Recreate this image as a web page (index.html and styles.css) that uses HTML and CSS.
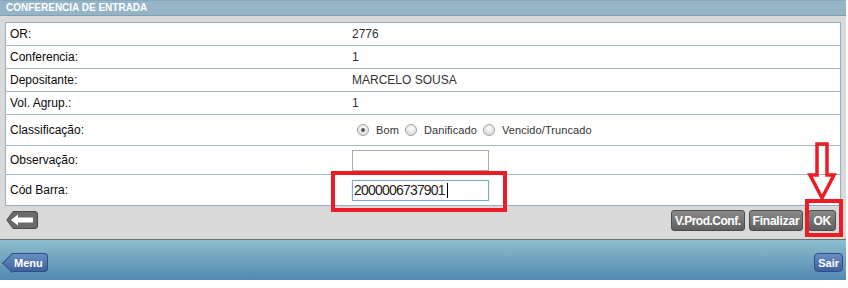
FILE: index.html
```html
<!DOCTYPE html>
<html>
<head>
<meta charset="utf-8">
<link rel="stylesheet" href="styles.css">
</head>
<body>
<div class="page">
  <div class="titlebar">CONFERENCIA DE ENTRADA</div>
  <div class="panel">
    <table class="grid">
      <tr class="r23"><td class="lbl">OR:</td><td class="val">2776</td></tr>
      <tr class="r23"><td class="lbl">Conferencia:</td><td class="val">1</td></tr>
      <tr class="r23"><td class="lbl">Depositante:</td><td class="val">MARCELO SOUSA</td></tr>
      <tr class="r23"><td class="lbl">Vol. Agrup.:</td><td class="val">1</td></tr>
      <tr class="r31"><td class="lbl">Classificação:</td><td class="val">
        <div class="radios">
          <span class="radio checked"></span><span class="rtxt">Bom</span>
          <span class="radio"></span><span class="rtxt">Danificado</span>
          <span class="radio"></span><span class="rtxt">Vencido/Truncado</span>
        </div>
      </td></tr>
      <tr class="r29"><td class="lbl">Observação:</td><td class="val"><div class="input"></div></td></tr>
      <tr class="r30 last"><td class="lbl">Cód Barra:</td><td class="val"><div class="input focus">2000006737901<span class="caret"></span></div></td></tr>
    </table>
    <div class="actions">
      <div class="back">
        <svg width="32" height="18" viewBox="0 0 32 18">
          <path d="M7 0.5 H29 Q31.5 0.5 31.5 3 V15 Q31.5 17.5 29 17.5 H7 L0.8 9 Z" fill="#6a6a6a" stroke="#4a4a4a" stroke-width="1"/>
          <path d="M5 9 L12 3.5 V6.5 H27 V11.5 H12 V14.5 Z" fill="#fff"/>
        </svg>
      </div>
      <div class="btns">
        <span class="gbtn narrow">V.Prod.Conf.</span>
        <span class="gbtn">Finalizar</span>
        <span class="gbtn ok">OK</span>
      </div>
    </div>
  </div>
  <div class="footer">
    <span class="menu">Menu</span>
    <span class="sair">Sair</span>
  </div>
  <div class="mark mark-input"></div>
  <div class="mark mark-ok"></div>
  <svg class="arrow" width="30" height="60" viewBox="0 0 30 60">
    <path d="M10 2 H20 V33 H27 L15 56 L3 33 H10 Z" fill="none" stroke="#ed1c24" stroke-width="3.5" stroke-linejoin="miter"/>
  </svg>
</div>
</body>
</html>
```

FILE: styles.css
```css
html, body { margin: 0; padding: 0; background: #fff; }
body { font-family: "Liberation Sans", Arial, sans-serif; }
.page { position: relative; width: 846px; height: 280px; background: #d9d9d9; display: flex; flex-direction: column; }
.titlebar { height: 16px; background: #95b4c6; border-top: 1px solid #86a8bd; border-bottom: 1px solid #7f9fb4; box-sizing: border-box; color: #fff; font-weight: bold; font-size: 10px; line-height: 14px; padding-left: 6px; letter-spacing: 0; }
.panel { padding: 6px 5px 0 5px; flex: 1; }
.grid { width: 836px; border-collapse: collapse; background: #fff; border: 1px solid #8fb0c6; font-size: 12px; color: #000; }
.grid td { border-bottom: 1px solid #9fb7c9; padding: 0; vertical-align: middle; }
.grid tr.last td { border-bottom: none; }
.r23 td { height: 22px; }
.r31 td { height: 30px; }
.r29 td { height: 28px; }
.r30 td { height: 30px; }
.lbl { width: 342px; padding-left: 4px !important; font-size: 12px; color: #0a0a0a; }
.val { padding-left: 0 !important; color: #333; font-size: 12px; }
.radios { display: flex; align-items: center; padding-left: 5px; color: #333; }
.radio { width: 12px; height: 12px; border-radius: 50%; border: 1px solid #a4a4a4; background: radial-gradient(circle at 50% 35%, #fdfdfd, #d2d2d2); box-sizing: border-box; margin-right: 7px; position: relative; }
.radio.checked::after { content: ""; position: absolute; left: 3px; top: 3px; width: 4px; height: 4px; border-radius: 50%; background: #555; }
.rtxt { margin-right: 6px; font-size: 11px; letter-spacing: 0.1px; }
.input { width: 137px; height: 21px; border: 1px solid #a9a9a9; box-sizing: border-box; background: #fff; font-size: 14px; line-height: 19px; padding-left: 1px; color: #222; }
.input.focus { border-color: #7ea7dd; box-shadow: 0 0 1px #9cc1ef; display: flex; align-items: center; letter-spacing: -0.8px; }
.caret { display: inline-block; width: 1px; height: 15px; background: #000; margin-left: 2px; }
.actions { display: flex; justify-content: space-between; align-items: flex-start; padding-top: 4px; }
.back { margin-left: 1px; margin-top: 1px; height: 18px; }
.btns { display: flex; gap: 4px; margin-right: 5px; }
.gbtn { display: inline-block; height: 21px; line-height: 20px; padding: 0 3px; background: linear-gradient(#8a8a8a, #5f5f5f); border: 1px solid #4c4c4c; border-radius: 3px; color: #fff; font-weight: bold; font-size: 12px; box-sizing: border-box; letter-spacing: -0.2px; }
.gbtn.narrow { letter-spacing: -0.5px; }
.gbtn.ok { padding: 0 4px; margin-left: 1px; }
.footer { height: 41px; border-top: 1px solid #707070; background: linear-gradient(#8dbecd, #5389b1); display: flex; justify-content: space-between; align-items: center; box-sizing: border-box; padding: 4px 3px 0 4px; }
.menu { position: relative; z-index: 0; margin-left: 8px; height: 19px; line-height: 18px; padding: 0 4px 0 2px; color: #fff; font-weight: bold; font-size: 11px; background: linear-gradient(#6a8dc2, #3e609c); border: 1px solid #304f85; border-left: none; border-radius: 0 4px 4px 0; box-sizing: border-box; }
.menu::before { content: ""; position: absolute; left: -7px; top: 2px; width: 13px; height: 13px; transform: rotate(45deg); background: linear-gradient(135deg, #6a8dc2, #3e609c); border-left: 1px solid #304f85; border-bottom: 1px solid #304f85; z-index: -1; }
.sair { height: 19px; line-height: 18px; padding: 0 3px; color: #fff; font-weight: bold; font-size: 11px; background: linear-gradient(#6a8dc2, #3e609c); border: 1px solid #304f85; border-radius: 4px; box-sizing: border-box; }
.mark { position: absolute; border: 4px solid #ed1c24; box-sizing: border-box; }
.mark-input { left: 331px; top: 171px; width: 176px; height: 41px; }
.mark-ok { left: 805px; top: 199px; width: 38px; height: 38px; }
.arrow { position: absolute; left: 807px; top: 142px; }
```
